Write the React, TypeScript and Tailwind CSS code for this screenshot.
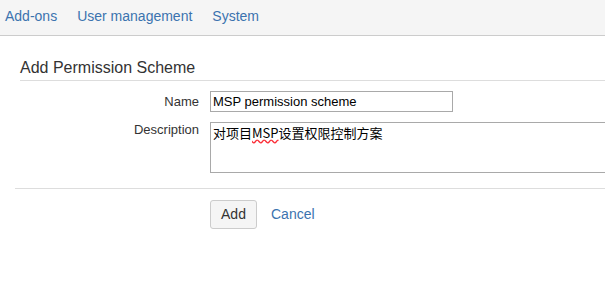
export default function App() {
	const font = { fontFamily: '"Liberation Sans", Arial, "Noto Sans CJK SC", sans-serif' };

	return (
		<div className="w-[605px] h-[295px] overflow-hidden bg-white text-[#333]" style={font}>
			{/* top nav */}
			<div className="h-[36px] bg-[#f5f5f5] border-b border-[#cccccc] flex items-center gap-5 px-[5px] pb-[3px] text-[14px] text-[#3b73af]">
				<a>Add-ons</a>
				<a>User management</a>
				<a>System</a>
			</div>

			<div className="pl-[15px]">
				<div className="ml-[5px] mt-[22px] pb-[2px] border-b border-[#dddddd]">
					<h2 className="text-[16px] leading-[20px]">Add Permission Scheme</h2>
				</div>

				<div className="mt-[10px] flex flex-col gap-[10px] text-[13px]">
					<div className="flex items-center">
						<label className="w-[195px] shrink-0 text-right pr-[11px]">Name</label>
						<input
							defaultValue="MSP permission scheme"
							className="w-[243px] h-[21px] border border-[#a9a9a9] px-[2px] text-[13px] text-black outline-none"
						/>
					</div>
					<div className="flex items-start">
						<label className="w-[195px] shrink-0 text-right pr-[11px] leading-[16px]">Description</label>
						<div className="w-[430px] shrink-0 h-[51px] border border-[#a9a9a9] px-[2px] pt-[1px] text-[13px] text-black leading-[18px]" style={{ fontFamily: '"Noto Sans CJK SC", sans-serif' }}>
							对项目<span className="underline decoration-wavy decoration-red-500">MSP</span>设置权限控制方案
						</div>
					</div>
				</div>

				<div className="mt-[15px] border-t border-[#dddddd]" />

				<div className="mt-[11px] ml-[195px] flex items-center gap-[14px] text-[14px]">
					<button className="w-[47px] h-[29px] bg-[#f5f5f5] border border-[#cccccc] rounded-[3px] text-[#333]">Add</button>
					<a className="text-[#3b73af]">Cancel</a>
				</div>
			</div>
		</div>
	);
}
